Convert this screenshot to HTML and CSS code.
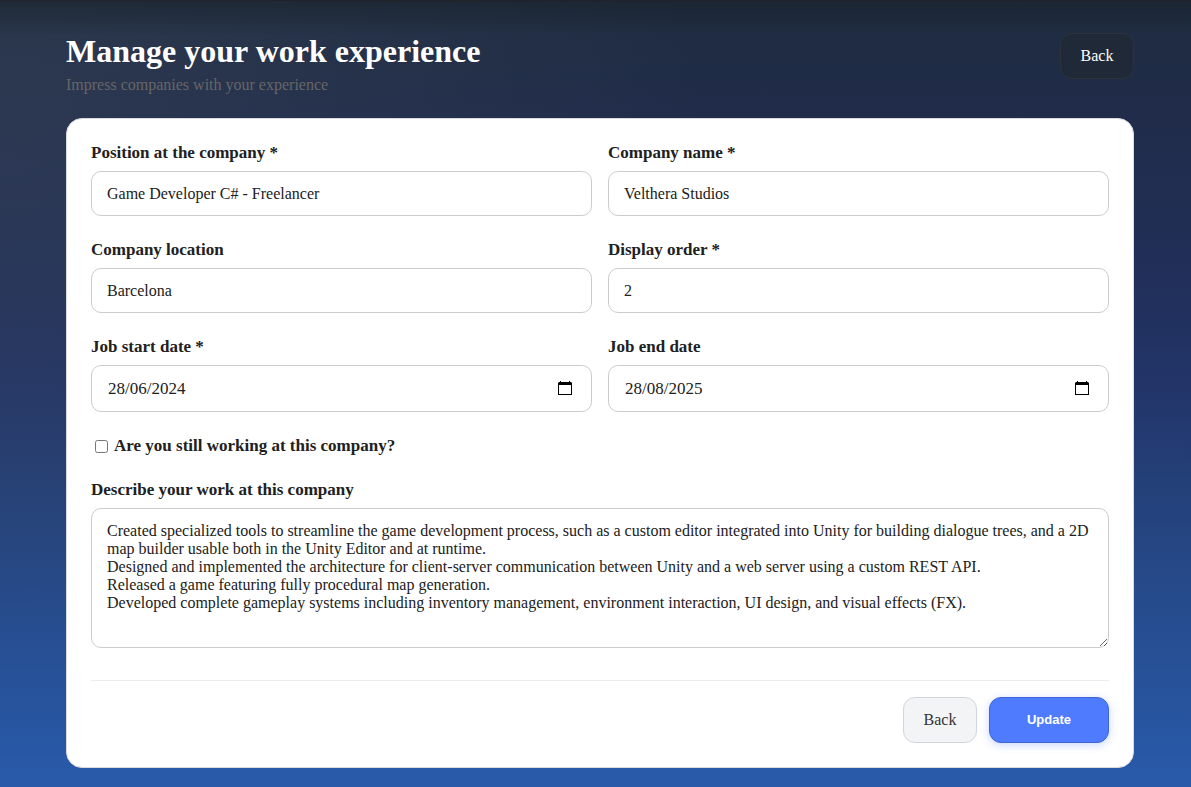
FILE: index.html
```html
<!DOCTYPE html>
<html lang="en">
<head>
<meta charset="utf-8">
<meta name="viewport" content="width=device-width, initial-scale=1">
<title>Manage your work experience</title>
<link rel="stylesheet" href="styles.css">
</head>
<body>
<main class="page">
  <header class="page-header">
    <div>
      <h1 class="title">Manage your work experience</h1>
      <p class="subtitle">Impress companies with your experience</p>
    </div>
    <a class="btn btn-dark" href="#">Back</a>
  </header>

  <form class="card">
    <div class="grid">
      <div class="field">
        <label for="position">Position at the company *</label>
        <input class="control" id="position" type="text" value="Game Developer C# - Freelancer">
      </div>
      <div class="field">
        <label for="company">Company name *</label>
        <input class="control" id="company" type="text" value="Velthera Studios">
      </div>
      <div class="field">
        <label for="location">Company location</label>
        <input class="control" id="location" type="text" value="Barcelona">
      </div>
      <div class="field">
        <label for="order">Display order *</label>
        <input class="control" id="order" type="text" inputmode="numeric" value="2">
      </div>
      <div class="field">
        <label for="start">Job start date *</label>
        <div class="control date">
          <input class="date-input" id="start" type="text" value="28/06/2024">
          <button class="date-btn" type="button" aria-label="Choose start date">
            <svg width="14" height="15" viewBox="0 0 14 15"><path d="M2 0h1v1h8V0h1v1h1l1 1v12H0V2l1-1h1zM1 4v9h12V4z" fill="#000" fill-rule="evenodd"/></svg>
          </button>
        </div>
      </div>
      <div class="field">
        <label for="end">Job end date</label>
        <div class="control date">
          <input class="date-input" id="end" type="text" value="28/08/2025">
          <button class="date-btn" type="button" aria-label="Choose end date">
            <svg width="14" height="15" viewBox="0 0 14 15"><path d="M2 0h1v1h8V0h1v1h1l1 1v12H0V2l1-1h1zM1 4v9h12V4z" fill="#000" fill-rule="evenodd"/></svg>
          </button>
        </div>
      </div>
      <div class="check wide">
        <input class="checkbox" id="current" type="checkbox">
        <label for="current">Are you still working at this company?</label>
      </div>
      <div class="field wide">
        <label for="description">Describe your work at this company</label>
        <textarea class="control area" id="description">Created specialized tools to streamline the game development process, such as a custom editor integrated into Unity for building dialogue trees, and a 2D map builder usable both in the Unity Editor and at runtime.
Designed and implemented the architecture for client-server communication between Unity and a web server using a custom REST API.
Released a game featuring fully procedural map generation.
Developed complete gameplay systems including inventory management, environment interaction, UI design, and visual effects (FX).</textarea>
      </div>
    </div>
    <div class="actions">
      <a class="btn btn-light" href="#">Back</a>
      <button class="btn btn-primary" type="submit">Update</button>
    </div>
  </form>
</main>
</body>
</html>
```
FILE: styles.css
```css
* { box-sizing: border-box; }

body {
  margin: 0;
  min-height: 100vh;
  font-family: "Liberation Serif", "Times New Roman", serif;
  font-size: 16px;
  line-height: 20px;
  color: #212121;
  background:
    linear-gradient(to bottom, rgba(32, 32, 36, .9), rgba(24, 34, 44, .6) 2px, rgba(24, 34, 44, 0) 36px),
    radial-gradient(ellipse 700px 520px at 0 130px, rgba(60, 72, 92, .45), rgba(60, 72, 92, 0)),
    linear-gradient(to bottom, #1f2d40 0, #202c4a 120px, #21305c 300px, #223468 380px, #244078 480px, #264b8c 600px, #2858a6 760px, #295aaa 100%);
}

.page {
  padding: 33px 57px 19px 66px;
}

.page-header {
  display: flex;
  justify-content: space-between;
  align-items: flex-start;
  margin-bottom: 24px;
}

.title {
  margin: 0 0 6px;
  font-size: 32px;
  line-height: 37px;
  color: #fff;
}

.subtitle {
  margin: 0;
  font-size: 16px;
  line-height: 18px;
  color: #666;
}

.card {
  padding: 24px;
  background: #fff;
  border: 1px solid #d9dade;
  border-radius: 16px;
}

.grid {
  display: grid;
  grid-template-columns: 1fr 1fr;
  gap: 24px 16px;
}

.wide { grid-column: 1 / -1; }

.field {
  display: flex;
  flex-direction: column;
  gap: 8px;
}

label {
  font-size: 17px;
  font-weight: bold;
}

.control {
  width: 100%;
  height: 45px;
  padding: 12px 15px;
  font: inherit;
  line-height: 18px;
  color: inherit;
  background: #fff;
  border: 1px solid #ccc;
  border-radius: 10px;
}

.date {
  display: flex;
  align-items: center;
  height: 47px;
  padding-left: 16px;
  padding-right: 19px;
}

.date-input {
  flex: 1;
  min-width: 0;
  padding: 0;
  border: 0;
  font: inherit;
  font-size: 17px;
  color: inherit;
  background: none;
}

.date-btn {
  display: flex;
  padding: 0;
  border: 0;
  background: none;
}

.area {
  display: block;
  height: 140px;
  padding-top: 13px;
  resize: vertical;
}

.check {
  display: flex;
  align-items: center;
  gap: 6px;
}

.checkbox { margin: 0 0 0 4px; }

.actions {
  display: flex;
  justify-content: flex-end;
  gap: 12px;
  margin-top: 32px;
  padding-top: 16px;
  border-top: 1px solid #ececec;
}

.btn {
  min-width: 74px;
  padding: 12px 19px;
  border: 1px solid;
  border-radius: 12px;
  font-size: 16px;
  line-height: 20px;
  text-align: center;
  text-decoration: none;
}

.btn-dark {
  color: #fff;
  background: #1f2937;
  border-color: #2c3238;
}

.btn-light {
  color: #333;
  background: #f3f4f6;
  border-color: #d1d5db;
}

.btn-primary {
  min-width: 120px;
  font-family: "Liberation Sans", Arial, sans-serif;
  font-size: 13px;
  font-weight: bold;
  color: #fff;
  background: #4f7bff;
  border-color: #3f66d6;
  box-shadow: 0 2px 8px rgba(79, 123, 255, .3);
}
```
